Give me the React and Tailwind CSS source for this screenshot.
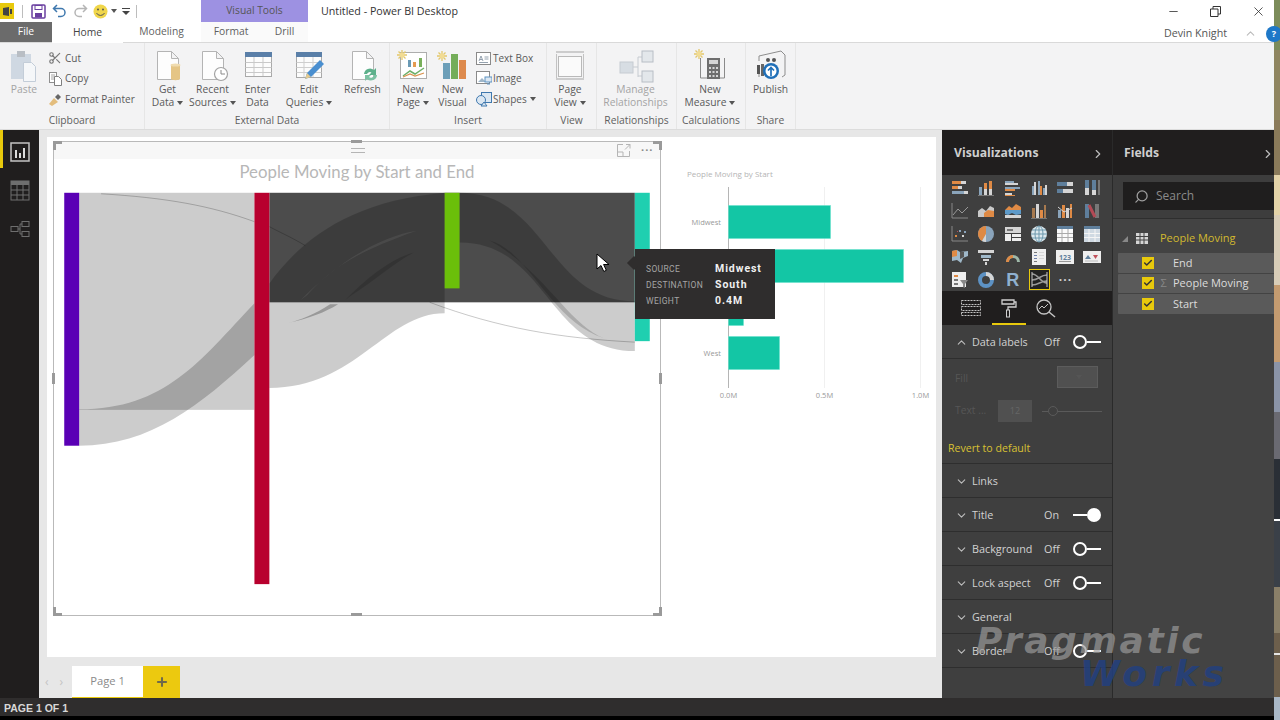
import React from 'react';
import { Scissors, Search, ChevronDown, ChevronUp, ChevronRight, Check, Plus, Minus, X } from 'lucide-react';

const Caret = () => (
  <svg width="6" height="4" viewBox="0 0 6 4" className="inline-block ml-[3px] mb-[1px]"><path d="M0 0h6L3 4z" fill="#555" /></svg>
);

const Doc = ({ children }) => (
  <svg width="36" height="34" viewBox="0 0 36 34">
    <path d="M7.5 2.5h14l7 7v21h-21z M21.5 2.5v7h7" fill="#fdfdfd" stroke="#b4b4b4" />
    {children}
  </svg>
);

const Sun = ({ x = 0, y = 0 }) => (
  <g transform={`translate(${x} ${y})`} stroke="#e3c76b" strokeWidth="1.3">
    <path d="M5 0v10M0 5h10M1.5 1.5l7 7M8.5 1.5l-7 7" />
    <circle cx="5" cy="5" r="2.4" fill="#f2dc93" stroke="none" />
  </g>
);

const icons = {
  paste: (
    <svg width="36" height="34" viewBox="0 0 36 34">
      <rect x="5" y="5" width="20" height="25" fill="#cfd8e2" />
      <rect x="11" y="2" width="8" height="6" fill="#b9bec4" />
      <path d="M17.5 13.5h8l4 4v15h-12z" fill="#f5f7f9" stroke="#c3cdd8" />
    </svg>
  ),
  get: <Doc><path d="M21 16c0-1.5 9-1.5 9 0v14c0 1.5-9 1.5-9 0z" fill="#e5c585" /><ellipse cx="25.5" cy="16" rx="5" ry="1.6" fill="#f0dcb0" /></Doc>,
  recent: <Doc><circle cx="26" cy="25" r="6.5" fill="#fff" stroke="#a3a3a3" strokeWidth="1.2" /><path d="M26 21v4h4" fill="none" stroke="#8a8a8a" /></Doc>,
  enter: (
    <svg width="36" height="34" viewBox="0 0 36 34">
      <rect x="5.5" y="3.5" width="26" height="24" fill="#fcfcfc" stroke="#a9a9a9" />
      <rect x="5" y="3" width="27" height="5" fill="#5a7fa8" />
      <path d="M5.5 13.5h26M5.5 18.5h26M5.5 23.5h26M14 8v19M23 8v19" stroke="#c9c9c9" />
    </svg>
  ),
  edit: (
    <svg width="36" height="34" viewBox="0 0 36 34">
      <rect x="5.5" y="3.5" width="25" height="25" fill="#fcfcfc" stroke="#a9a9a9" />
      <rect x="5" y="3" width="26" height="5" fill="#5a7fa8" />
      <path d="M5.5 13.5h25M5.5 18.5h25M5.5 23.5h25M13 8v20M22 8v20" stroke="#cfcfcf" />
      <path d="M14 30l2-6 13-13 4 4-13 13z" fill="#4a8fd0" />
      <path d="M14 30l2-6 4 4z" fill="#e3c98f" />
    </svg>
  ),
  refresh: (
    <Doc>
      <path d="M19 25a6 6 0 0 1 10-4l2-2v7h-7l2.5-2.5a3 3 0 0 0-4.5 1.5z" fill="#5db08b" />
      <path d="M32 26a6 6 0 0 1-10 4l-2 2v-6h6l-2 2a3 3 0 0 0 5-2z" fill="#7cc2a3" />
    </Doc>
  ),
  newPage: (
    <svg width="36" height="34" viewBox="0 0 36 34">
      <rect x="5.5" y="3.5" width="26" height="26" fill="#fff" stroke="#adadad" />
      <rect x="13" y="11" width="3" height="7" fill="#6a9ab5" />
      <rect x="18" y="13" width="3" height="5" fill="#e59b52" />
      <rect x="24" y="9" width="3" height="9" fill="#79b05b" />
      <path d="M8 27l7-5 5 3 9-6" fill="none" stroke="#6db06a" strokeWidth="1.5" />
      <path d="M8 28l7-3 5 2 9-3" fill="none" stroke="#d9934f" strokeWidth="1.2" />
      <Sun x="2" y="1" />
    </svg>
  ),
  newVisual: (
    <svg width="36" height="34" viewBox="0 0 36 34">
      <rect x="8" y="14" width="7" height="16" fill="#6d9fb8" />
      <rect x="16" y="5" width="7" height="25" fill="#74ad59" />
      <rect x="24" y="11" width="7" height="19" fill="#dd8a4d" />
      <Sun x="2" y="2" />
    </svg>
  ),
  page: (
    <svg width="36" height="34" viewBox="0 0 36 34">
      <path d="M4 3h28M4 30h28" stroke="#a5a5a5" />
      <path d="M4.5 5v24M31.5 5v24" stroke="#c2c2c2" />
      <rect x="6.5" y="7.5" width="23" height="20" fill="#fafafa" stroke="#b9b9b9" />
    </svg>
  ),
  manage: (
    <svg width="36" height="34" viewBox="0 0 36 34">
      <path d="M15 18h5M20 8v20M20 8h4M20 27h4" stroke="#c6cbd1" fill="none" />
      <rect x="2" y="13" width="13" height="11" fill="#d7dde3" stroke="#c6cbd1" />
      <rect x="24" y="2" width="11" height="11" fill="#e3e7eb" stroke="#b8bec5" />
      <rect x="24" y="22" width="11" height="11" fill="#e3e7eb" stroke="#b8bec5" />
    </svg>
  ),
  measure: (
    <svg width="36" height="34" viewBox="0 0 36 34">
      <path d="M8.5 9v20h24V9" fill="none" stroke="#8a8a8a" />
      <rect x="15" y="9" width="13" height="21" fill="#6e6e6e" />
      <rect x="17" y="11" width="9" height="4" fill="#d5d5d5" />
      <path d="M17 18h2v2h-2zM20.5 18h2v2h-2zM24 18h2v2h-2zM17 22h2v2h-2zM20.5 22h2v2h-2zM24 22h2v2h-2zM17 26h2v2h-2zM20.5 26h2v2h-2zM24 26h2v2h-2z" fill="#d5d5d5" />
      <Sun x="2" y="0" />
    </svg>
  ),
  publish: (
    <svg width="36" height="34" viewBox="0 0 36 34">
      <path d="M6 12V7l22-5 4 4v20l-3 2M6 28v-4" fill="none" stroke="#8d8d8d" />
      <rect x="4" y="16" width="3" height="9" fill="#555" />
      <rect x="8" y="15" width="3" height="12" fill="#666" />
      <circle cx="15" cy="11" r="2" fill="#555" />
      <circle cx="21" cy="11" r="2" fill="#555" />
      <circle cx="18" cy="22" r="8" fill="#1f6fb8" />
      <circle cx="18" cy="22" r="5.5" fill="#fff" />
      <path d="M18 27v-8M15 21.5l3-3 3 3" stroke="#1f6fb8" strokeWidth="1.7" fill="none" />
    </svg>
  ),
};

const small = {
  copy: (
    <svg width="15" height="15" viewBox="0 0 15 15">
      <rect x="1.5" y="1.5" width="7" height="10" fill="#fff" stroke="#8f8f8f" />
      <path d="M6.5 5.5h4l3 3v6h-7z" fill="#fff" stroke="#7f7f7f" />
      <path d="M3 4h4M3 6h3M3 8h3" stroke="#a5a5a5" />
    </svg>
  ),
  brush: (
    <svg width="15" height="15" viewBox="0 0 15 15">
      <path d="M1 12l5-6 4 4-6 4z" fill="#e3bd7d" />
      <path d="M7 5l3-3 3 3-3 3z" fill="#666" />
    </svg>
  ),
  text: (
    <svg width="15" height="13" viewBox="0 0 15 13">
      <rect x="0.5" y="0.5" width="14" height="12" fill="#fff" stroke="#8a8a8a" />
      <path d="M3 9l2-5 2 5M3.8 7.5h2.4M8.5 5h4M8.5 7h4M3 10.5h9" stroke="#7a8a9a" fill="none" strokeWidth="0.8" />
    </svg>
  ),
  image: (
    <svg width="16" height="15" viewBox="0 0 16 15">
      <rect x="0.5" y="0.5" width="13" height="12" fill="#fff" stroke="#8a8a8a" />
      <path d="M2 11l4-4 3 3 2-1 2 2z" fill="#9fb6c9" />
      <rect x="9" y="6" width="7" height="5" fill="#dbe7f2" stroke="#5e93c2" />
      <path d="M11 13h3" stroke="#5e93c2" />
    </svg>
  ),
  shapes: (
    <svg width="17" height="15" viewBox="0 0 17 15">
      <rect x="5.5" y="0.5" width="10" height="10" fill="#dbe7f2" stroke="#3f78ae" />
      <circle cx="5" cy="8" r="4.5" fill="#dbe7f2" stroke="#3f78ae" />
      <path d="M8 10l3 4H5z" fill="#dbe7f2" stroke="#3f78ae" />
    </svg>
  ),
};

const Btn = ({ w, icon, l1, l2, caret, dim, cls = '' }) => (
  <div className={`flex flex-col items-center shrink-0 ${cls}`} style={{ width: w }}>
    <div className="h-[34px] flex items-center justify-center">{icons[icon]}</div>
    <div className={`text-center leading-[13px] text-[10.3px] whitespace-nowrap ${dim ? 'text-[#a4a4a4]' : 'text-[#5a5a5a]'}`}>
      <div>{l1}</div>
      {l2 && <div>{l2}{caret && <Caret />}</div>}
    </div>
  </div>
);

const SmallRow = ({ icon, label, caret }) => (
  <div className="flex items-center h-[20.5px] text-[10px] text-[#5a5a5a] whitespace-nowrap">
    <span className="w-[17px] flex items-center">{icon}</span>
    {label}{caret && <Caret />}
  </div>
);

const Group = ({ w, label, children, cls = '' }) => (
  <div className="flex flex-col shrink-0 border-r border-[#e6e6e6]" style={{ width: w }}>
    <div className={`h-[70px] pt-[6px] flex ${cls}`}>{children}</div>
    <div className="h-[14px] text-center leading-[14px] text-[10.3px] text-[#5f5f5f] whitespace-nowrap">{label}</div>
  </div>
);

const TitleBar = () => (
  <div className="h-[22px] flex items-center relative shrink-0">
    <div className="w-[14px] h-[16px] bg-[#e8c90c] flex items-center justify-center ml-0">
      <svg width="11" height="11" viewBox="0 0 11 11"><path d="M1 2l6-1v9l-6-1zM8 3h2v5H8z" fill="#444" /></svg>
    </div>
    <div className="w-[1px] h-[13px] bg-[#bdbdbd] ml-[8px]" />
    <svg width="15" height="15" viewBox="0 0 15 15" className="ml-[8px]">
      <rect x="1" y="1" width="13" height="13" rx="1" fill="none" stroke="#6a3fa0" strokeWidth="1.5" />
      <rect x="4" y="1.5" width="7" height="4" fill="none" stroke="#6a3fa0" />
      <rect x="4" y="9" width="7" height="4.5" fill="#6a3fa0" />
    </svg>
    <svg width="16" height="14" viewBox="0 0 16 14" className="ml-[6px]"><path d="M5 1L1.5 4.5 5 8M2 4.5h7a4 4 0 0 1 0 8H6" fill="none" stroke="#3f78ae" strokeWidth="1.5" /></svg>
    <svg width="16" height="14" viewBox="0 0 16 14" className="ml-[4px]"><path d="M11 1l3.5 3.5L11 8M14 4.5H7a4 4 0 0 0 0 8h3" fill="none" stroke="#b5b5b5" strokeWidth="1.5" /></svg>
    <svg width="15" height="15" viewBox="0 0 15 15" className="ml-[5px]">
      <circle cx="7.5" cy="7.5" r="7" fill="#f0d64a" />
      <circle cx="5" cy="5.5" r="1" fill="#555" />
      <circle cx="10" cy="5.5" r="1" fill="#555" />
      <path d="M3.5 9a4.5 4.5 0 0 0 8 0" fill="none" stroke="#555" />
    </svg>
    <Caret />
    <svg width="8" height="8" viewBox="0 0 8 8" className="ml-[5px]"><path d="M0 1.5h8" stroke="#444" /><path d="M0 4h8L4 8z" fill="#444" /></svg>
    <div className="w-[1px] h-[13px] bg-[#bdbdbd] ml-[6px]" />
    <div className="w-[107px] h-[22px] bg-[#9d91e2] ml-[64px] text-center leading-[20px] text-[10.3px] text-[#555]">Visual Tools</div>
    <div className="ml-[13px] text-[10.7px] text-[#333]">Untitled - Power BI Desktop</div>
    <div className="ml-auto flex items-center text-[#333]">
      <Minus size={13} strokeWidth={1.5} />
      <svg width="11" height="11" viewBox="0 0 11 11" className="ml-[30px]"><path d="M0.5 3h7.5v7.5H0.5zM3 3V0.5h7.5V8H8" fill="none" stroke="#333" /></svg>
      <X size={15} strokeWidth={1.3} className="ml-[30px] mr-[8px]" />
    </div>
  </div>
);

const Tabs = () => (
  <div className="h-[21px] flex items-stretch text-[10.3px] text-[#5f5f5f] border-b border-[#d9d9d9] shrink-0 relative">
    <div className="w-[52px] bg-[#6b6b6b] text-white flex items-center justify-center">File</div>
    <div className="w-[71px] bg-white flex items-center justify-center text-[#444] relative top-[1px]">Home</div>
    <div className="w-[77px] flex items-center justify-center">Modeling</div>
    <div className="w-[60px] ml-[1px] flex items-center justify-center bg-[#fafafa]">Format</div>
    <div className="w-[47px] flex items-center justify-center bg-[#fafafa]">Drill</div>
    <div className="ml-auto flex items-center pt-[3px]">
      <span className="text-[10.7px] text-[#555] mr-[17px]">Devin Knight</span>
      <ChevronUp size={13} className="text-[#bbb] mr-[9px]" />
      <span className="w-[16px] h-[16px] rounded-full bg-[#1e78c8] text-white text-[9px] font-bold flex items-center justify-center -mr-[8px]">?</span>
    </div>
  </div>
);

const Ribbon = () => (
  <div className="h-[87px] bg-[#f3f3f4] flex shrink-0 border-b border-[#dcdcdc]">
    <Group w={145} label="Clipboard">
      <Btn w={48} icon="paste" l1="Paste" dim />
      <div className="flex flex-col -mt-[1px]">
        <SmallRow icon={<Scissors size={14} className="text-[#777]" />} label="Cut" />
        <SmallRow icon={small.copy} label="Copy" />
        <SmallRow icon={small.brush} label="Format Painter" />
      </div>
    </Group>
    <Group w={245} label="External Data">
      <Btn w={45} icon="get" l1="Get" l2="Data" caret />
      <Btn w={45} icon="recent" l1="Recent" l2="Sources" caret />
      <Btn w={45} icon="enter" l1="Enter" l2="Data" />
      <Btn w={50} icon="edit" l1="Edit" l2="Queries" caret cls="ml-[4px]" />
      <Btn w={45} icon="refresh" l1="Refresh" cls="ml-[6px]" />
    </Group>
    <Group w={157} label="Insert">
      <Btn w={40} icon="newPage" l1="New" l2="Page" caret cls="ml-[3px]" />
      <Btn w={39} icon="newVisual" l1="New" l2="Visual" />
      <div className="flex flex-col ml-[4px] -mt-[1px]">
        <SmallRow icon={small.text} label="Text Box" />
        <SmallRow icon={small.image} label="Image" />
        <SmallRow icon={small.shapes} label="Shapes" caret />
      </div>
    </Group>
    <Group w={50} label="View"><Btn w={46} icon="page" l1="Page" l2="View" caret /></Group>
    <Group w={80} label="Relationships"><Btn w={77} icon="manage" l1="Manage" l2="Relationships" dim /></Group>
    <Group w={69} label="Calculations"><Btn w={66} icon="measure" l1="New" l2="Measure" caret /></Group>
    <Group w={50} label="Share"><Btn w={49} icon="publish" l1="Publish" /></Group>
  </div>
);

const Rail = () => (
  <div className="w-[39px] bg-[#201e1e] relative flex flex-col items-center gap-[18px] pt-[12px] shrink-0">
    <div className="absolute left-0 top-0 w-[3px] h-[38px] bg-[#e8c90c]" />
    <svg width="20" height="20" viewBox="0 0 20 20" className="ml-[1px]">
      <rect x="1" y="1" width="18" height="18" fill="none" stroke="#c4c4c4" strokeWidth="1.5" />
      <path d="M5 16V8h2v8zM9 16v-5h2v5zM13 16V6h2v10z" fill="#dcdcdc" />
    </svg>
    <svg width="20" height="21" viewBox="0 0 20 21" className="ml-[1px]">
      <rect x="1" y="1" width="18" height="19" fill="none" stroke="#6e6e6e" />
      <rect x="1" y="1" width="18" height="4" fill="#6e6e6e" />
      <path d="M1 10h18M1 15h18M7 5v15M13 5v15" stroke="#6e6e6e" />
    </svg>
    <svg width="20" height="20" viewBox="0 0 20 20" className="ml-[1px]">
      <g fill="none" stroke="#6e6e6e">
        <rect x="1" y="7.5" width="7" height="5" />
        <rect x="12" y="2.5" width="7" height="5" />
        <rect x="12" y="12.5" width="7" height="5" />
        <path d="M8 10h2V5h2M10 10v5h2" />
      </g>
    </svg>
  </div>
);

const Handle = ({ cls }) => <div className={`absolute bg-[#9a9a9a] ${cls}`} />;

const Sankey = () => (
  <svg viewBox="53 141 608 475" className="absolute inset-0 w-full h-full">
    <rect x="269" y="192" width="367" height="110" fill="#4c4c4c" />
    <g fill="#000" fillOpacity="0.2">
      <rect x="78" y="192" width="176" height="218" />
      <path d="M78 409.5C165 409.5 200 360 254 303V355C200 405 150 446 78 446Z" />
      <path d="M269 283C300 240 350 200 445 192V313C385 313 357 388 269 388Z" />
      <path d="M460 192C548 192 548 301 636 301V351C548 351 548 242 460 242Z" />
    </g>
    <path d="M287 323C310 318 325 312 338 304L330 304C315 314 300 320 287 323Z" fill="#000" fillOpacity="0.25" />
    <path d="M350 296C375 280 395 262 414 252C392 258 368 276 345 300Z" fill="#000" fillOpacity="0.14" />
    <path d="M307 295C325 275 345 255 417 230C385 235 345 255 300 300Z" fill="#fff" fillOpacity="0.07" />
    <path d="M490 240C530 250 550 320 605 338C570 325 545 270 490 240Z" fill="#000" fillOpacity="0.16" />
    <g fill="none" stroke="#000" strokeOpacity="0.22">
      <path d="M100 193C166 197 210 205 254 221" />
      <path d="M269 226C280 232 290 236 305 245" />
      <path d="M430 302C500 328 560 338 636 342" />
    </g>
    <rect x="63" y="192" width="15" height="254" fill="#5a00b5" />
    <rect x="254" y="192" width="15" height="393" fill="#b8002e" />
    <rect x="445" y="192" width="15" height="96" fill="#6bbf0a" />
    <rect x="636" y="192" width="15" height="149" fill="#1fcfb0" />
  </svg>
);

const BarChart = () => (
  <svg viewBox="670 160 265 250" className="w-full h-full" fontFamily="Open Sans, sans-serif">
    <text x="687" y="177" fontSize="8" fill="#b4b4b4">People Moving by Start</text>
    <path d="M824.5 187v201M920.5 187v201" stroke="#f0f0f0" />
    <path d="M728.5 187v201" stroke="#b5b5b5" />
    <g fill="#13c6a5" stroke="#6be3cd" strokeWidth="0.6">
      <rect x="728.5" y="205.5" width="102" height="33" />
      <rect x="728.5" y="249.5" width="175" height="33" />
      <rect x="728.5" y="293.5" width="15" height="32" />
      <rect x="728.5" y="336.5" width="51" height="33" />
    </g>
    <g fontSize="7.5" fill="#999">
      <text x="721" y="225" textAnchor="end">Midwest</text>
      <text x="721" y="356" textAnchor="end">West</text>
      <text x="728.5" y="398" textAnchor="middle">0.0M</text>
      <text x="824.5" y="398" textAnchor="middle">0.5M</text>
      <text x="920.5" y="398" textAnchor="middle">1.0M</text>
    </g>
  </svg>
);

const Tooltip = () => (
  <div className="absolute left-[588px] top-[112px] w-[140px] h-[70px] bg-[#2f2d2d] pl-[11px] pt-[12px] flex flex-col gap-0 font-['Roboto',sans-serif]">
    <div className="absolute -left-[6px] top-[9px] w-[10px] h-[10px] bg-[#2f2d2d] rotate-45" />
    {[['SOURCE', 'Midwest'], ['DESTINATION', 'South'], ['WEIGHT', '0.4M']].map(([a, b]) => (
      <div key={a} className="flex items-center h-[16px] relative">
        <span className="w-[69px] text-[8.5px] text-[#a5a5a5] tracking-[0.35px]">{a}</span>
        <span className="text-[10.5px] font-bold text-[#f0f0f0] tracking-[0.95px]">{b}</span>
      </div>
    ))}
  </div>
);

const Cursor = () => (
  <svg width="14" height="20" viewBox="0 0 14 20" className="absolute left-[549px] top-[116px]">
    <path d="M1 1v15l4-3.5 2.8 6 2.5-1.2-2.7-5.8H13z" fill="#fff" stroke="#000" />
  </svg>
);

const Canvas = () => (
  <div className="flex-1 min-w-0 bg-[#e7e7e7] flex flex-col">
    <div className="h-[7px]" />
    <div className="h-[520px] ml-[8px] mr-[6px] bg-white relative">
      <div className="absolute left-[6px] top-[4px] w-[608px] h-[475px] border border-[#b9b9b9]">
        <Sankey />
        <div className="relative h-[17px] bg-[#f7f7f7]" />
        <div className="relative text-center text-[16.8px] leading-[22px] mt-[2px] text-[#b7b7b7] font-['Lato',sans-serif]">People Moving by Start and End</div>
        <div className="absolute left-[297px] top-[6px] w-[14px] h-[5px] border-y border-[#b5b5b5]" />
        <svg width="14" height="13" viewBox="0 0 14 13" className="absolute left-[563px] top-[2px]">
          <path d="M6 0.5H0.5v12h12V7M0.5 8H6v4.5M8 5.5l5-5M9 0.5h4v4" fill="none" stroke="#b5b5b5" />
        </svg>
        <div className="absolute left-[587px] top-[2px] text-[#888] text-[11px] leading-[11px] tracking-[1px] font-bold">···</div>
      </div>
      <Handle cls="left-[6px] top-[4px] w-[9px] h-[3px]" />
      <Handle cls="left-[6px] top-[4px] w-[3px] h-[9px]" />
      <Handle cls="left-[606px] top-[4px] w-[9px] h-[3px]" />
      <Handle cls="left-[612px] top-[4px] w-[3px] h-[9px]" />
      <Handle cls="left-[6px] top-[476px] w-[9px] h-[3px]" />
      <Handle cls="left-[6px] top-[470px] w-[3px] h-[9px]" />
      <Handle cls="left-[606px] top-[476px] w-[9px] h-[3px]" />
      <Handle cls="left-[612px] top-[470px] w-[3px] h-[9px]" />
      <Handle cls="left-[304px] top-[3px] w-[11px] h-[3px]" />
      <Handle cls="left-[304px] top-[476px] w-[11px] h-[3px]" />
      <Handle cls="left-[5px] top-[236px] w-[3px] h-[11px]" />
      <Handle cls="left-[612px] top-[236px] w-[3px] h-[11px]" />
      <div className="absolute left-[623px] top-[23px] w-[265px] h-[250px]"><BarChart /></div>
      <Tooltip />
      <Cursor />
    </div>
    <div className="flex-1 flex items-end">
      <div className="w-[33px] h-[32px] flex items-center gap-[11px] pl-[6px] text-[#c4c4c4] text-[12px]">
        <span>‹</span><span>›</span>
      </div>
      <div className="w-[71px] h-[32px] bg-white border-b border-[#e8c90c] flex items-center justify-center text-[11.2px] text-[#8a8a8a]">Page 1</div>
      <div className="w-[37px] h-[32px] bg-[#ecc90f] flex items-center justify-center"><Plus size={14} strokeWidth={3.5} className="text-[#6f6a4a]" /></div>
    </div>
  </div>
);

const G = ({ children }) => (
  <svg width="18" height="18" viewBox="0 0 18 18">{children}</svg>
);
const O = '#df8a45', B = '#8aa4bb', L = '#d5d5d5', M = '#777';
const R = (a) => a.map(([x, y, w, h, c], i) => <rect key={i} x={x} y={y} width={w} height={h} fill={c} />);

const vizIcons = [
  <G>{R([[1, 2, 9, 3, O], [10, 2, 5, 3, L], [1, 7, 6, 3, O], [7, 7, 4, 3, L], [1, 12, 12, 3, B], [13, 12, 4, 3, L]])}</G>,
  <G>{R([[2, 8, 3, 8, B], [7, 4, 3, 6, O], [7, 10, 3, 6, L], [12, 2, 3, 8, O], [12, 10, 3, 6, L], [1, 16, 16, 1, M]])}</G>,
  <G>{R([[1, 2, 9, 2, B], [1, 4, 13, 2, L], [1, 8, 15, 2, B], [1, 10, 10, 2, O], [1, 14, 7, 2, L], [1, 16, 10, 1, O]])}</G>,
  <G>{R([[2, 7, 2, 9, B], [4, 3, 2, 13, L], [8, 2, 2, 14, B], [10, 7, 2, 9, O], [13, 9, 2, 7, B], [15, 6, 2, 10, L]])}</G>,
  <G>{R([[1, 3, 10, 4, '#5f7f9c'], [11, 3, 6, 4, L], [1, 10, 6, 4, '#5f7f9c'], [7, 10, 10, 4, L]])}</G>,
  <G>{R([[2, 1, 4, 8, '#5f7f9c'], [2, 9, 4, 7, L], [9, 1, 4, 10, '#5f7f9c'], [9, 11, 4, 5, L], [15, 1, 2, 15, M]])}</G>,
  <G><path d="M1 1v15h16" fill="none" stroke="#888" /><path d="M2 13l5-6 4 4 6-6" fill="none" stroke="#999" /></G>,
  <G><path d="M1 15V9l4-3 4 3 4-5 4 2v9z" fill="#c9c9c9" /><path d="M7 15V11l4-3 6 1v6z" fill={O} /></G>,
  <G><path d="M1 8l4-4 3 2 4-4 5 3v3H1z" fill={O} /><path d="M1 8h16v4l-5 1-4-2-4 2-3-1z" fill="#5d9ac9" /><path d="M1 13h16v3H1z" fill={L} /></G>,
  <G>{R([[2, 6, 3, 10, '#a87a4f'], [6, 2, 3, 14, L], [10, 8, 3, 8, O], [14, 3, 2, 13, '#a87a4f'], [1, 16, 16, 1, M]])}</G>,
  <G>{R([[2, 8, 3, 8, B], [6, 3, 3, 13, O], [10, 6, 3, 10, L], [14, 2, 2, 14, O]])}<path d="M2 5l6 5 8-4" fill="none" stroke={L} /></G>,
  <G>{R([[2, 2, 4, 14, '#5f7f9c'], [12, 2, 4, 14, M]])}<path d="M6 3l6 12" stroke="#b34a55" strokeWidth="3" /></G>,
  <G><path d="M1 1v15h16" fill="none" stroke="#888" />{R([[4, 10, 2, 2, O], [8, 5, 2, 2, B], [11, 10, 2, 2, L], [6, 6, 1, 1, '#b34a55'], [13, 6, 2, 2, B]])}</G>,
  <G><circle cx="9" cy="9" r="8" fill={B} /><path d="M9 9V1a8 8 0 0 0-8 8c0 3 2 6 4 7z" fill={O} /><path d="M9 9L5 16a8 8 0 0 0 4 1z" fill={L} /></G>,
  <G>{R([[1, 2, 16, 6, L], [1, 9, 6, 7, '#eee'], [8, 9, 9, 3, '#eee'], [8, 13, 9, 3, '#eee'], [3, 4, 6, 2, M]])}</G>,
  <G><circle cx="9" cy="9" r="8" fill="#dde9ee" /><path d="M1 9h16M2 5h14M2 13h14M9 1v16" stroke="#6d99ad" /><ellipse cx="9" cy="9" rx="4" ry="8" fill="none" stroke="#6d99ad" /></G>,
  <G>{R([[1, 1, 16, 16, '#fafafa'], [1, 1, 16, 3, '#5f7f9c']])}<path d="M1 8.5h16M1 12.5h16M6 4v13M12 4v13" stroke="#aaa" /></G>,
  <G>{R([[1, 1, 16, 16, '#cfd9e2'], [1, 1, 16, 3, '#5f7f9c']])}<path d="M1 8.5h16M1 12.5h16M6 4v13M12 4v13" stroke="#f5f5f5" /></G>,
  <G><path d="M1 3l5-1 3 2 8-1v5l-5 2-2 5-4-3-5 1z" fill="#9fb8c9" /><path d="M1 3l5-1v6L1 9z" fill={O} /><path d="M9 4l4 0v5l-4 2z" fill="#555" /></G>,
  <G>{R([[1, 2, 16, 3, L], [4, 7, 10, 3, '#9fb8c9'], [6, 11, 6, 2, L], [8, 14, 2, 3, L]])}</G>,
  <G><path d="M2 14a7 7 0 0 1 14 0h-3a4 4 0 0 0-8 0z" fill="#9fb8a9" /><path d="M2 14a7 7 0 0 1 7-7v3a4 4 0 0 0-4 4z" fill={O} /></G>,
  <G>{R([[2, 1, 14, 16, '#eee'], [4, 4, 3, 1, M], [4, 7, 3, 1, '#6d7fa8'], [4, 10, 3, 1, '#6d7fa8'], [4, 13, 3, 1, M], [9, 4, 5, 1, L], [9, 7, 5, 1, L], [9, 10, 5, 1, L]])}</G>,
  <svg width="18" height="14" viewBox="0 0 18 14"><rect width="18" height="14" fill="#eee" /><text x="9" y="9.5" fontSize="7" fill="#5f7f9c" textAnchor="middle" fontWeight="bold">123</text><rect x="3" y="11" width="12" height="1" fill="#999" /></svg>,
  <svg width="18" height="12" viewBox="0 0 18 12"><rect width="18" height="12" fill="#eee" /><path d="M5 4l3 4H2z" fill="#5f7f9c" /><path d="M10 4h5l-2.5 4z" fill="#c0505a" /><rect x="2" y="9.5" width="13" height="1" fill="#bbb" /></svg>,
  <G>{R([[1, 1, 14, 15, '#eee'], [3, 4, 4, 2, O], [3, 8, 4, 2, M], [3, 12, 4, 2, M]])}<path d="M9 9h8l-3 4v4l-2-1v-3z" fill="#888" /></G>,
  <G><circle cx="9" cy="9" r="6" fill="none" stroke="#5d92c4" strokeWidth="4" /><path d="M9 3a6 6 0 0 1 6 6" fill="none" stroke="#d5d5d5" strokeWidth="4" /></G>,
  <span className="text-[#8fb0cf] text-[18px] font-bold leading-none font-['Liberation_Sans',sans-serif]">R</span>,
  <div className="w-[21px] h-[21px] border border-[#e8c90c] bg-[#222] flex items-center justify-center">
    <svg width="17" height="17" viewBox="0 0 17 17"><path d="M1 3c7 0 8 9 15 9M1 9c7 0 8-5 15-5M1 14c7 0 8-4 15-4" fill="none" stroke="#9a9a9a" strokeWidth="1.5" /><path d="M1 1v15M16 1v15" stroke="#c9c9c9" /></svg>
  </div>,
  <span className="text-[#d0d0d0] text-[12px] font-bold leading-none tracking-[1px]">···</span>,
];

const Toggle = ({ on }) => (
  <div className="flex items-center w-[28px] -mt-[1px]">
    {on ? (
      <>
        <div className="w-[14px] h-[2px] bg-white" />
        <div className="w-[14px] h-[14px] rounded-full bg-white" />
      </>
    ) : (
      <>
        <div className="w-[14px] h-[14px] rounded-full border-2 border-white" />
        <div className="w-[14px] h-[2px] bg-white" />
      </>
    )}
  </div>
);

const Section = ({ label, value, up, on }) => (
  <div className="h-[34px] flex items-center pl-[13px] pt-[2px] border-b border-[#2e2e2e] text-[10.8px] text-[#d2d2d2]">
    {up ? <ChevronUp size={13} className="text-[#bdbdbd] w-[13px]" /> : <ChevronDown size={13} className="text-[#bdbdbd] w-[13px]" />}
    <span className="w-[72px] ml-[4px] whitespace-nowrap">{label}</span>
    {value && <span className="w-[29px]">{value}</span>}
    {value && <Toggle on={on} />}
  </div>
);

const VizPanel = () => (
  <div className="w-[171px] bg-[#3f3f3f] flex flex-col border-r border-[#2a2a2a] shrink-0">
    <div className="h-[45px] bg-[#201e1e] flex items-center pl-[12px] pr-[7px] pt-[2px] justify-between">
      <span className="text-[12.2px] font-bold text-[#cfcfcf]">Visualizations</span>
      <ChevronRight size={14} className="text-[#bcbcbc]" />
    </div>
    <div className="h-[116px] grid grid-cols-6 grid-rows-5 pl-[5px] pr-[7px] pt-[2px]">
      {vizIcons.map((ic, i) => <div key={i} className="flex items-center justify-center">{ic}</div>)}
    </div>
    <div className="h-[34px] bg-[#201e1e] flex items-center relative">
      <svg width="20" height="16" viewBox="0 0 20 16" className="ml-[19px]"><path d="M0.5 0.5h19v4h-19zM0.5 6.5h19v4h-19zM0.5 12.5h19v3h-19z" fill="none" stroke="#c4c4c4" strokeDasharray="2 1" /></svg>
      <svg width="16" height="19" viewBox="0 0 16 19" className="ml-[20px]"><path d="M1 1h12v4H1zM13 3h2v5H7v3" fill="none" stroke="#d0d0d0" strokeWidth="1.3" /><rect x="5.5" y="11" width="3" height="7" fill="none" stroke="#d0d0d0" /></svg>
      <svg width="20" height="19" viewBox="0 0 20 19" className="ml-[19px]"><circle cx="8" cy="8" r="7" fill="none" stroke="#c4c4c4" strokeWidth="1.3" /><path d="M13 13l6 5" stroke="#c4c4c4" strokeWidth="1.5" /><path d="M3 10l3-3 2 2 4-4" fill="none" stroke="#c4c4c4" /></svg>
      <div className="absolute left-[50px] bottom-0 w-[34px] h-[2px] bg-[#e8c90c]" />
    </div>
    <Section label="Data labels" value="Off" up />
    <div className="h-[105px] flex flex-col border-b border-[#2e2e2e] text-[10.3px]">
      <div className="mt-[7px] h-[22px] flex items-center pl-[13px] pr-[14px] justify-between text-[#565656]">
        <span className="pt-[3px]">Fill</span>
        <div className="w-[41px] h-[22px] bg-[#505050] border border-[#5c5c5c] flex items-center justify-center"><Caret /></div>
      </div>
      <div className="mt-[12px] h-[22px] flex items-center pl-[13px] text-[#565656]">
        <span className="w-[43px]">Text ...</span>
        <div className="w-[34px] h-[22px] bg-[#505050] flex items-center justify-center text-[9px] text-[#666]">12</div>
        <div className="ml-[10px] w-[60px] flex items-center">
          <div className="w-[6px] h-[1px] bg-[#5a5a5a]" />
          <div className="w-[10px] h-[10px] rounded-full border border-[#5a5a5a]" />
          <div className="flex-1 h-[1px] bg-[#5a5a5a]" />
        </div>
      </div>
      <div className="mt-[18px] h-[16px] leading-[16px] pl-[6px] text-[10.6px] text-[#d9c133]">Revert to default</div>
    </div>
    <Section label="Links" />
    <Section label="Title" value="On" on />
    <Section label="Background" value="Off" />
    <Section label="Lock aspect" value="Off" />
    <Section label="General" />
    <Section label="Border" value="Off" />
  </div>
);

const FieldRow = ({ label, sigma }) => (
  <div className="h-[19.5px] ml-[5px] mb-[1px] bg-[#5a5a5a] flex items-center text-[11px] text-[#dcdcdc] rounded-l-[1px]">
    <div className="w-[12px] h-[12px] ml-[24px] bg-[#e8c90c] flex items-center justify-center"><Check size={10} strokeWidth={3.5} className="text-[#333]" /></div>
    <span className="w-[19px] text-center text-[11px] text-[#888]">{sigma ? 'Σ' : ''}</span>
    <span>{label}</span>
  </div>
);

const FieldsPanel = () => (
  <div className="flex-1 min-w-0 bg-[#434343] flex flex-col">
    <div className="h-[45px] bg-[#201e1e] flex items-center pl-[11px] pt-[2px] justify-between">
      <span className="text-[12.2px] font-bold text-[#cfcfcf]">Fields</span>
      <ChevronRight size={14} className="text-[#bcbcbc] -mr-[1px]" />
    </div>
    <div className="h-[44px] bg-[#3d3d3d] border-b border-[#2e2e2e] pl-[10px] pt-[7px]">
      <div className="h-[28px] bg-[#1f1e1e] flex items-center pl-[11px] text-[12px] text-[#8a8a8a]">
        <Search size={15} className="text-[#a0a0a0] -scale-x-100 mr-[7px]" />
        Search
      </div>
    </div>
    <div className="h-[34px] flex items-center pl-[9px] pt-[5px] text-[11px] text-[#d2b92f]">
      <svg width="6" height="6" viewBox="0 0 6 6"><path d="M6 0v6H0z" fill="#888" /></svg>
      <svg width="12" height="11" viewBox="0 0 12 11" className="ml-[8px]"><rect width="12" height="11" fill="#d5d5d5" /><path d="M0 3.5h12M0 7h12M4 0v11M8 0v11" stroke="#434343" /></svg>
      <span className="ml-[12px]">People Moving</span>
    </div>
    <FieldRow label="End" />
    <FieldRow label="People Moving" sigma />
    <FieldRow label="Start" />
  </div>
);

const Wallpaper = () => (
  <div className="w-[6px] shrink-0 flex flex-col">
    <div className="h-[50px] bg-[#7c8c5a]" />
    <div className="h-[70px] bg-[#8f8560]" />
    <div className="h-[55px] bg-[#8a7a5a]" />
    <div className="h-[40px] bg-[#e3d3a8]" />
    <div className="h-[70px] bg-[#d8cdb8]" />
    <div className="h-[77px] bg-[#c49b70]" />
    <div className="h-[50px] bg-[#8b94a8]" />
    <div className="h-[47px] bg-[#6a6a72]" />
    <div className="h-[60px] bg-[#2a2f36]" />
    <div className="h-[2px] bg-white" />
    <div className="h-[66px] bg-[#3a4048]" />
    <div className="h-[46px] bg-[#8a7f68]" />
    <div className="h-[20px] bg-[#6d5f4c]" />
    <div className="h-[2px] bg-[#e5e5e5]" />
    <div className="h-[42px] bg-[#6d5f4c]" />
    <div className="flex-1 bg-[#a9b7c6]" />
  </div>
);

export default function App() {
  return (
    <div className="w-[1280px] h-[720px] overflow-hidden flex bg-white font-['Open_Sans',sans-serif]">
      <div className="w-[1274px] flex flex-col relative">
        <TitleBar />
        <Tabs />
        <Ribbon />
        <div className="h-[568px] flex">
          <Rail />
          <div className="w-[903px] flex shrink-0"><Canvas /></div>
          <VizPanel />
          <FieldsPanel />
        </div>
        <div className="h-[18px] bg-[#2f2d2d] pl-[4px] pt-[3px] flex items-center text-[10.5px] font-bold text-[#d8d8d8] shrink-0 font-['Liberation_Sans',sans-serif]">PAGE 1 OF 1</div>
        <div className="h-[4px] bg-black shrink-0" />
        <div className="absolute left-[976px] top-[619px] text-[36px] leading-[44px] font-bold italic text-[#9a9a9a]/70 tracking-[2.6px] font-['DejaVu_Sans',sans-serif] pointer-events-none whitespace-nowrap">Pragmatic</div>
        <div className="absolute left-[1080px] top-[652px] text-[36px] leading-[44px] font-bold italic text-[#22407f]/85 tracking-[4.6px] font-['DejaVu_Sans',sans-serif] pointer-events-none whitespace-nowrap">Works</div>
      </div>
      <Wallpaper />
    </div>
  );
}
